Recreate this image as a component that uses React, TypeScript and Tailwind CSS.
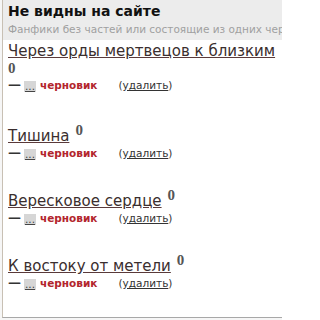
import React from 'react';

interface Draft {
  title: string;
  count: number;
  wrapCount?: boolean;
}

const DRAFTS: Draft[] = [
  { title: 'Через орды мертвецов к близким', count: 0, wrapCount: true },
  { title: 'Тишина', count: 0 },
  { title: 'Вересковое сердце', count: 0 },
  { title: 'К востоку от метели', count: 0 },
];

const font = { fontFamily: '"DejaVu Sans", Verdana, sans-serif' };
const serif = { fontFamily: '"Liberation Serif", serif' };

const DraftRow: React.FC = () => (
  <div className="flex items-center h-[16px] text-[10.5px] leading-[16px] whitespace-nowrap">
    <span className="text-[#333] text-[13px] font-bold">—</span>
    <span className="ml-[3px] px-[1px] bg-[#d6d6d6] text-[#444] underline leading-[11px] h-[11px] mt-[2px]">...</span>
    <span className="ml-[4px] font-bold text-[#b3262d]">черновик</span>
    <span className="ml-[21px] text-[#333]">
      (<span className="underline">удалить</span>)
    </span>
  </div>
);

const App: React.FC = () => {
  return (
    <div className="w-[282px] h-[320px] bg-[#f6f6f6] overflow-hidden" style={font}>
      <div className="ml-[2px] w-[300px] h-[318px] bg-white border-l border-b border-l-[#c8c0b4] border-b-[#a8a8a8]">
        {/* header */}
        <div className="h-[40px] bg-[#ececec] pl-[5px] pt-[2px]">
          <div className="text-[14px] leading-[18px] font-bold text-[#111]">Не видны на сайте</div>
          <div className="text-[10.5px] leading-[18px] text-[#a0a0a0] whitespace-nowrap">
            Фанфики без частей или состоящие из одних черновиков
          </div>
        </div>

        {/* drafts */}
        <div className="pl-[5px] pt-[3px]">
          {DRAFTS.map((d, i) => (
            <div key={d.title} className={i === 0 ? 'mb-[35px]' : 'mb-[32px]'}>
              {d.wrapCount ? (
                <>
                  <div className="text-[15px] leading-[17px] h-[17px] whitespace-nowrap">
                    <a href="#" className="text-[#3a2e2e] underline decoration-[#5a3a3a]">{d.title}</a>
                  </div>
                  <div className="h-[17px] leading-[17px] text-[15px] font-bold text-[#555]" style={serif}>
                    {d.count}
                  </div>
                </>
              ) : (
                <div className="flex items-start text-[15px] leading-[17px] h-[17px] whitespace-nowrap">
                  <a href="#" className="text-[#3a2e2e] underline decoration-[#5a3a3a]">{d.title}</a>
                  <span className="ml-[6px] -mt-[5px] text-[15px] leading-[14px] font-bold text-[#555]" style={serif}>
                    {d.count}
                  </span>
                </div>
              )}
              <DraftRow />
            </div>
          ))}
        </div>
      </div>
    </div>
  );
};

export default App;
